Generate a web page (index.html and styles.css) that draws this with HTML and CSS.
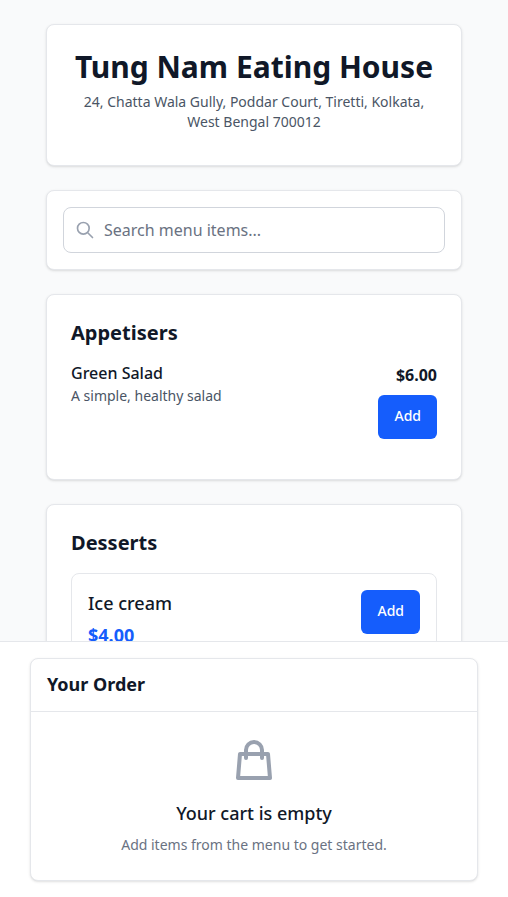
FILE: index.html
```html
<!DOCTYPE html>
<html lang="en">
<head>
  <meta charset="utf-8">
  <meta name="viewport" content="width=device-width, initial-scale=1">
  <title>Tung Nam Eating House</title>
  <link rel="stylesheet" href="styles.css">
</head>
<body>
  <div class="app">
    <main class="menu">
      <div class="container">
        <header class="card venue">
          <h1 class="venue-name">Tung Nam Eating House</h1>
          <p class="venue-address">24, Chatta Wala Gully, Poddar Court, Tiretti, Kolkata, West Bengal 700012</p>
        </header>

        <form class="card search" role="search">
          <div class="search-field">
            <svg class="search-icon" viewBox="0 0 24 24" fill="none" stroke="currentColor" stroke-width="2" stroke-linecap="round" stroke-linejoin="round" aria-hidden="true">
              <path d="M21 21l-6-6m2-5a7 7 0 11-14 0 7 7 0 0114 0z"/>
            </svg>
            <input class="search-input" type="text" placeholder="Search menu items..." aria-label="Search menu items">
          </div>
        </form>

        <section class="card section">
          <h2 class="section-title">Appetisers</h2>
          <article class="item item-plain">
            <div class="item-text">
              <h3 class="item-name">Green Salad</h3>
              <p class="item-description">A simple, healthy salad</p>
            </div>
            <div class="item-side">
              <span class="item-price">$6.00</span>
              <button class="add-button" type="button">Add</button>
            </div>
          </article>
        </section>

        <section class="card section">
          <h2 class="section-title">Desserts</h2>
          <article class="item item-boxed">
            <div class="item-text">
              <h3 class="boxed-name">Ice cream</h3>
              <p class="boxed-price">$4.00</p>
            </div>
            <button class="add-button" type="button">Add</button>
          </article>
        </section>
      </div>
    </main>

    <aside class="order-bar">
      <section class="card order">
        <h2 class="order-title">Your Order</h2>
        <div class="order-empty">
          <svg class="bag-icon" viewBox="0 0 24 24" fill="none" stroke="currentColor" stroke-width="2" stroke-linecap="round" stroke-linejoin="round" aria-hidden="true">
            <path d="M16 11V7a4 4 0 00-8 0v4M5 9h14l1 12H4L5 9z"/>
          </svg>
          <h3 class="empty-title">Your cart is empty</h3>
          <p class="empty-text">Add items from the menu to get started.</p>
        </div>
      </section>
    </aside>
  </div>
</body>
</html>
```

FILE: styles.css
```css
*,
*::before,
*::after {
  box-sizing: border-box;
}

body,
h1,
h2,
h3,
p {
  margin: 0;
}

body {
  background: #f9fafb;
  color: #101828;
  font-family: "Noto Sans", sans-serif;
  font-size: 16px;
  line-height: 24px;
}

button,
input {
  font: inherit;
}

svg {
  display: block;
}

.app {
  display: flex;
  flex-direction: column;
  height: 100vh;
}

.menu {
  flex: 1;
  min-height: 0;
  overflow-y: auto;
  scrollbar-width: none;
}

.container {
  display: flex;
  flex-direction: column;
  gap: 24px;
  max-width: 448px;
  margin: 0 auto;
  padding: 24px 16px;
}

.card {
  background: #fff;
  border: 1px solid #e5e7eb;
  border-radius: 8px;
  box-shadow: 0 1px 3px rgba(0, 0, 0, 0.1), 0 1px 2px -1px rgba(0, 0, 0, 0.1);
}

.venue {
  padding: 24px 24px 33px;
  text-align: center;
}

.venue-name {
  margin-bottom: 7px;
  font-size: 30px;
  font-weight: 700;
  line-height: 36px;
}

.venue-address {
  color: #4a5565;
  font-size: 14px;
  line-height: 20px;
}

.search {
  padding: 16px;
}

.search-field {
  display: flex;
  align-items: center;
  gap: 9px;
  height: 46px;
  padding: 0 11px;
  border: 1px solid #d1d5dc;
  border-radius: 8px;
}

.search-icon {
  flex: none;
  width: 20px;
  height: 20px;
  color: #99a1af;
}

.search-input {
  flex: 1;
  min-width: 0;
  padding: 0;
  border: 0;
  outline: 0;
  background: transparent;
  color: inherit;
}

.search-input::placeholder {
  color: #6a7282;
  opacity: 1;
}

.section {
  padding: 24px;
}

.section-title {
  margin-bottom: 16px;
  font-size: 20px;
  font-weight: 700;
  line-height: 28px;
}

.item {
  display: flex;
  align-items: flex-start;
  justify-content: space-between;
  gap: 16px;
}

.item-plain {
  padding-bottom: 16px;
}

.item-name {
  margin-bottom: 4px;
  font-size: 16px;
  font-weight: 500;
  line-height: 20px;
}

.item-description {
  color: #4a5565;
  font-size: 14px;
  line-height: 18px;
}

.item-side {
  display: flex;
  flex-direction: column;
  align-items: flex-end;
  gap: 8px;
}

.item-price {
  font-weight: 700;
}

.add-button {
  min-height: 44px;
  padding: 11px 16px 13px;
  border: 0;
  border-radius: 6px;
  background: #155dfc;
  color: #fff;
  font-size: 14px;
  font-weight: 500;
  line-height: 20px;
  cursor: pointer;
}

.item-boxed {
  padding: 16px;
  border: 1px solid #e5e7eb;
  border-radius: 8px;
}

.boxed-name {
  margin-bottom: 6px;
  font-size: 18px;
  font-weight: 500;
  line-height: 26px;
}

.boxed-price {
  color: #155dfc;
  font-size: 18px;
  font-weight: 700;
  line-height: 26px;
}

.order-bar {
  padding: 16px;
  border-top: 1px solid #e5e7eb;
  background: #fff;
}

.order {
  max-width: 448px;
  margin: 0 auto;
}

.order-title {
  padding: 12px 16px 14px;
  border-bottom: 1px solid #e5e7eb;
  font-size: 18px;
  font-weight: 700;
  line-height: 26px;
}

.order-empty {
  display: flex;
  flex-direction: column;
  align-items: center;
  padding: 24px 24px 26px;
  text-align: center;
}

.bag-icon {
  width: 48px;
  height: 48px;
  margin-bottom: 16px;
  color: #99a1af;
}

.empty-title {
  margin-bottom: 10px;
  font-size: 18px;
  font-weight: 500;
  line-height: 26px;
}

.empty-text {
  color: #6a7282;
  font-size: 14px;
  line-height: 18px;
}
```
